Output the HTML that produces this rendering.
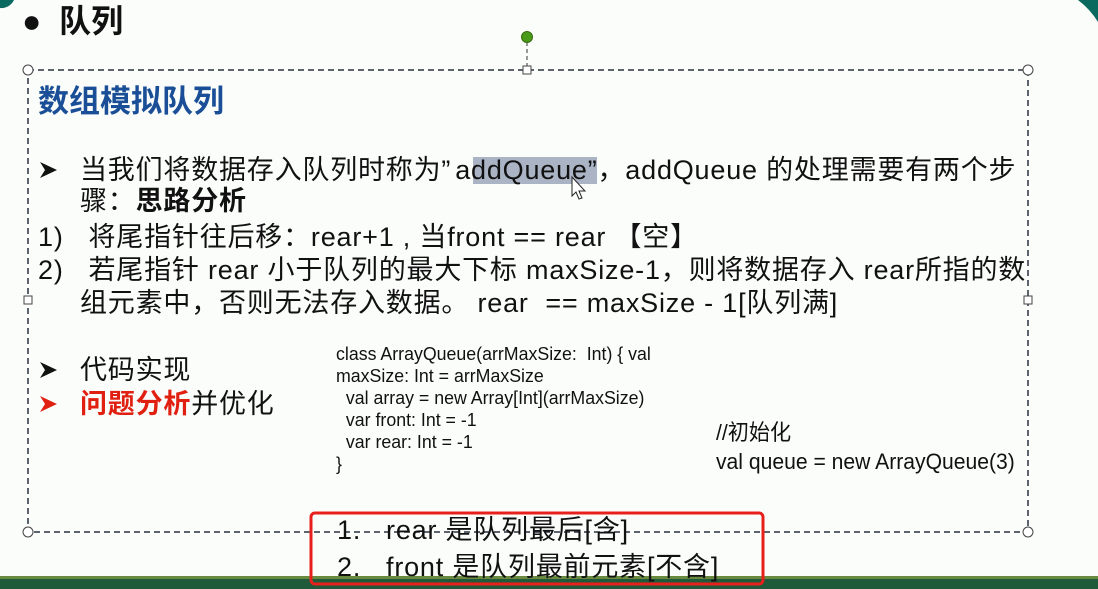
<!DOCTYPE html>
<html><head><meta charset="utf-8"><style>
body{margin:0;width:1098px;height:589px;overflow:hidden;background:#fbfdfb;position:relative;font-family:"Liberation Sans","Noto Sans CJK SC",sans-serif;color:#111}
.a{position:absolute;white-space:nowrap}
.t{font-size:27px;line-height:34px;letter-spacing:0.8px}
.c{font-size:18.5px;transform:scaleX(.96);transform-origin:0 0;line-height:22px}
</style></head><body>
<svg class="a" style="left:0;top:0" width="1098" height="589">
<path d="M1078 0 A80 80 0 0 1 1098 22 L1098 0Z" fill="#0a6a60"/>
<path d="M0 0 L14 0 A14 14 0 0 1 0 8Z" fill="#0a6a60"/>
<rect x="0" y="578" width="1098" height="11" fill="#1f5a3a"/>
<rect x="0" y="576" width="1098" height="3" fill="#6a8a40"/>
<rect x="473" y="157" width="124" height="27" fill="#aab4c4"/>
<line x1="527" y1="42" x2="527" y2="66" stroke="#333" stroke-dasharray="4,3"/>
<circle cx="527" cy="37" r="5.5" fill="#4a9a1a" stroke="#3a6a10"/>
<rect x="28" y="70" width="1000" height="462" fill="none" stroke="#2a3240" stroke-width="1.5" stroke-dasharray="6,4"/>
<g fill="#fff" stroke="#444">
<circle cx="28" cy="70" r="5"/><circle cx="1028" cy="70" r="5"/><circle cx="28" cy="532" r="5"/><circle cx="1028" cy="532" r="5"/>
<rect x="523" y="66" width="8" height="8"/><rect x="24" y="296" width="8" height="8"/><rect x="1024" y="296" width="8" height="8"/>
</g>
<g fill="#111">
<path d="M40 162 L57 170 L40 178 L45 170Z"/>
<path d="M40 362 L57 370 L40 378 L45 370Z"/>
<path d="M40 396 L57 404 L40 412 L45 404Z" fill="#e02010"/>
</g>
<rect x="311" y="513" width="452" height="71" rx="4" fill="none" stroke="#e8201c" stroke-width="3"/>
</svg>
<div class="a" style="left:22px;top:-4px;font-size:32px;font-weight:bold">●&nbsp;&nbsp;队列</div>
<div class="a" style="left:38px;top:76px;font-size:31px;font-weight:bold;color:#1a4f98">数组模拟队列</div>
<div class="a t" style="left:80px;top:153px">当我们将数据存入队列时称为”<span style="margin-left:4px">addQueue</span>”，addQueue 的处理需要有两个步</div>
<div class="a t" style="left:80px;top:184px">骤：<b>思路分析</b></div>
<div class="a t" style="left:38px;top:220px">1)&nbsp;&nbsp; 将尾指针往后移：rear+1 , 当front == rear 【空】</div>
<div class="a t" style="left:38px;top:253px">2)&nbsp;&nbsp; 若尾指针 rear 小于队列的最大下标 maxSize-1，则将数据存入 rear所指的数</div>
<div class="a t" style="left:80px;top:286px">组元素中，否则无法存入数据。 rear &nbsp;== maxSize - 1[队列满]</div>
<div class="a t" style="left:80px;top:353px">代码实现</div>
<div class="a t" style="left:80px;top:387px;color:#e02010"><b>问题分析</b><span style="color:#111">并优化</span></div>
<div class="a c" style="left:336px;top:343px">class ArrayQueue(arrMaxSize: &nbsp;Int) { val<br>maxSize: Int = arrMaxSize<br>&nbsp; val array = new Array[Int](arrMaxSize)<br>&nbsp; var front: Int = -1<br>&nbsp; var rear: Int = -1<br>}</div>
<div class="a" style="left:716px;top:418px;font-size:22px;transform:scaleX(.96);transform-origin:0 0;line-height:29px">//初始化<br>val queue = new ArrayQueue(3)</div>
<div class="a t" style="left:337px;top:513px">1.&nbsp;&nbsp; rear 是队列最后[含]</div>
<div class="a t" style="left:337px;top:550px">2.&nbsp;&nbsp; front 是队列最前元素[不含]</div>
<svg class="a" style="left:570px;top:176px" width="20" height="28"><path d="M2 1 l0 19 l4 -4 l3 7 l3 -1 l-3 -7 l6 0z" fill="#fff" stroke="#222"/></svg>
</body></html>
